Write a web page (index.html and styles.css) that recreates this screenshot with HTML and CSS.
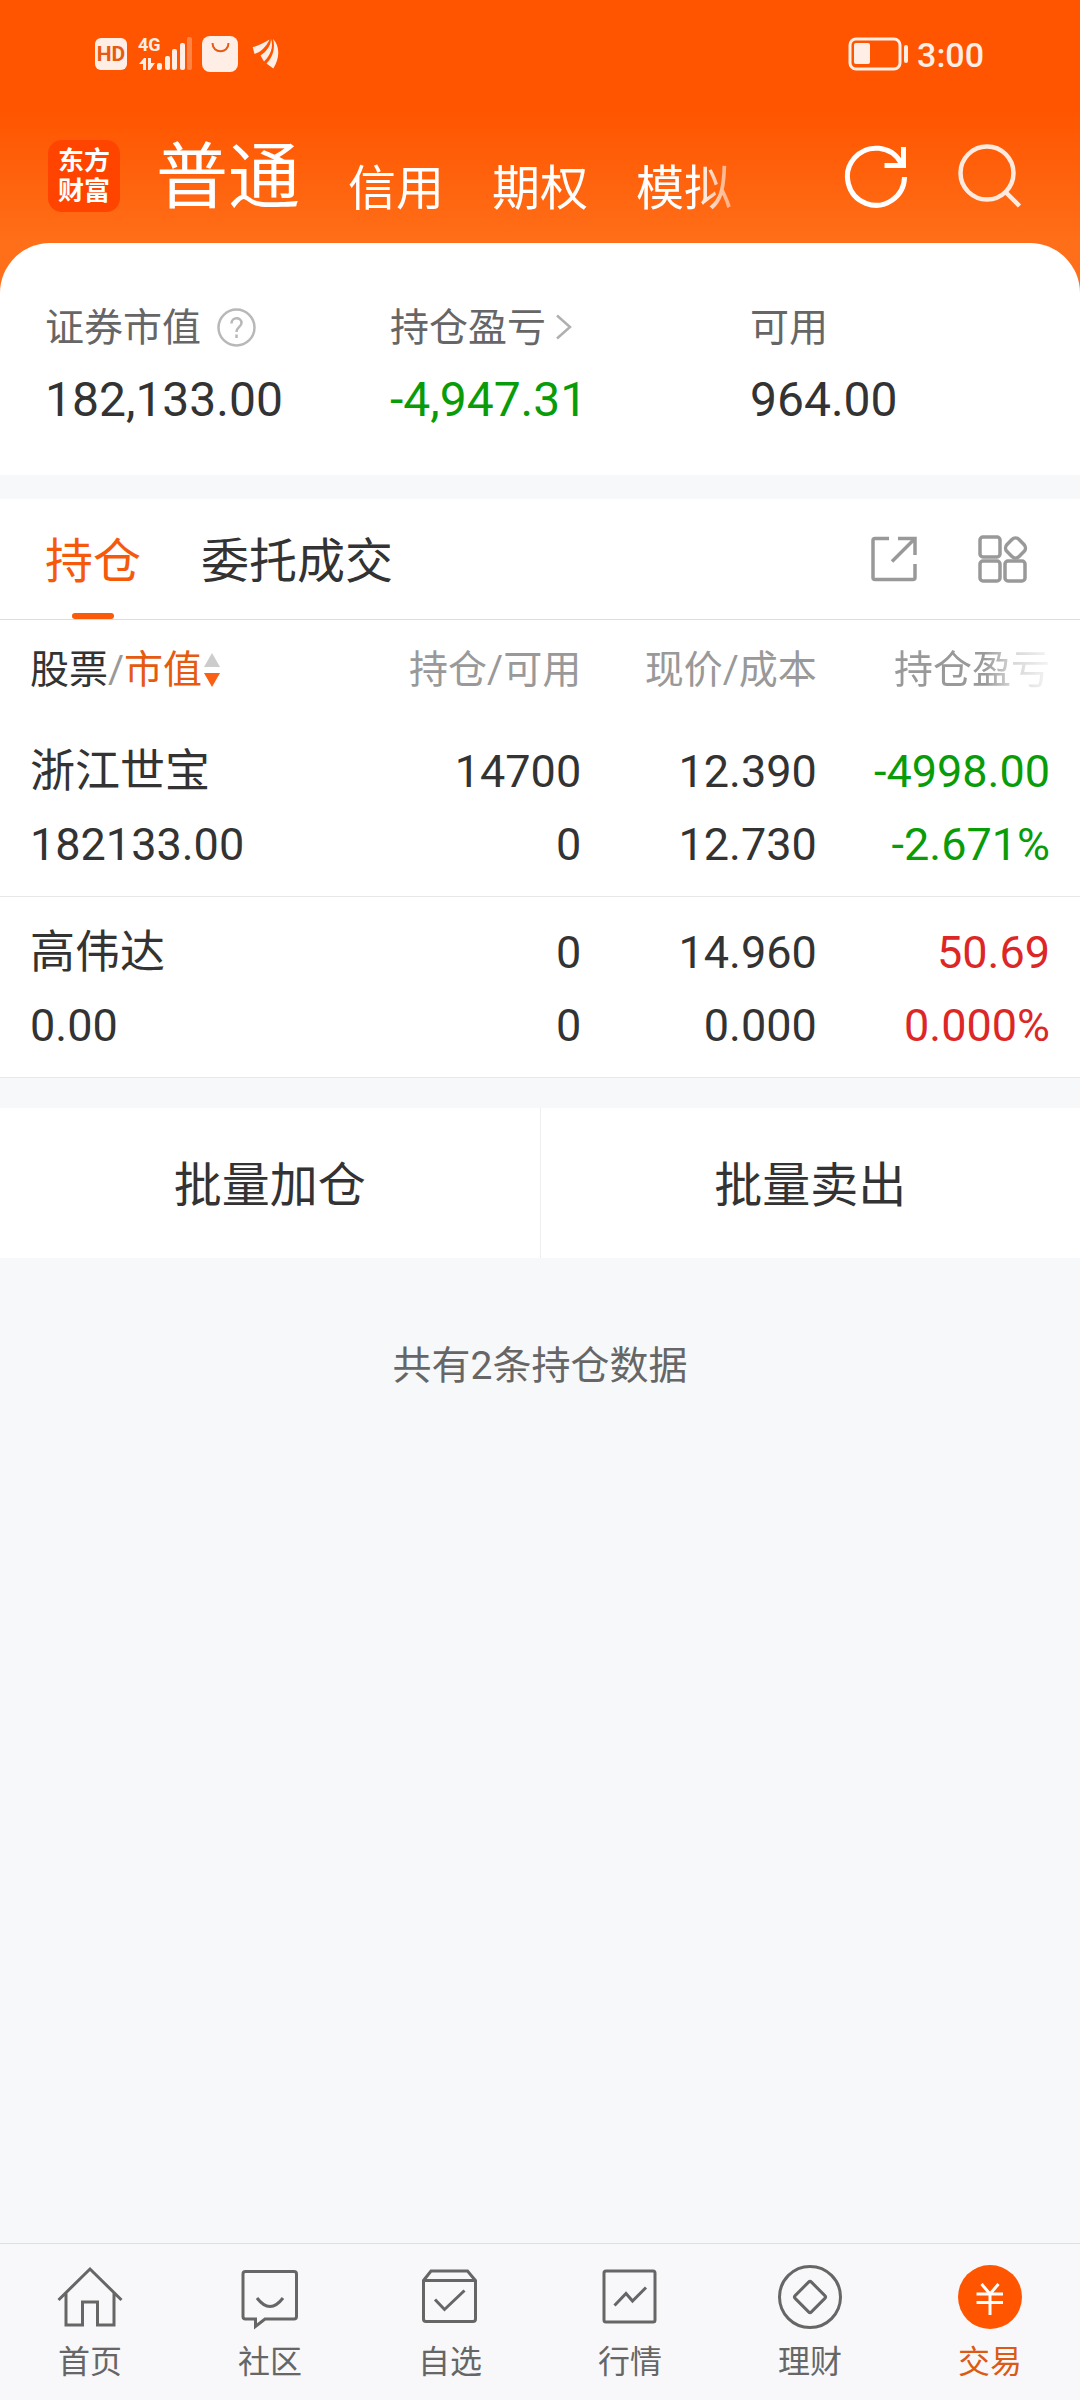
FILE: index.html
```html
<!DOCTYPE html>
<html lang="zh-CN">
<head>
    <meta charset="UTF-8">
    <meta name="viewport" content="width=device-width, initial-scale=1">
    <title>交易</title>
    <link rel="stylesheet" href="styles.css">
</head>
<body>

<header class="header">
    <div class="status">
        <svg class="status-hd" width="34" height="34" viewBox="0 0 34 34">
            <rect x="1" y="1" width="32" height="32" rx="6" fill="#ffeee5"/>
            <text x="17" y="24" text-anchor="middle" font-size="21" font-weight="700" fill="#e85a14">HD</text>
        </svg>
        <svg class="status-signal" width="56" height="48" viewBox="0 -6 56 48" fill="#ffeee5">
            <text x="0" y="15" font-size="18" font-weight="700">4G</text>
            <path d="M1 28L6 22H8V34H5V28ZM10 22H13V27H17L12 34H10Z"/>
            <rect x="19" y="27" width="5" height="7" rx="2"/>
            <rect x="27" y="20" width="5" height="14" rx="2"/>
            <rect x="34" y="13" width="5" height="21" rx="2"/>
            <rect x="42" y="7" width="5" height="27" rx="2"/>
            <rect x="49" y="1" width="5" height="33" rx="2" opacity="0.3"/>
        </svg>
        <svg class="status-bag" width="36" height="36" viewBox="0 0 36 36">
            <rect width="36" height="36" rx="8" fill="#ffeee5"/>
            <path d="M10.5 7C10.5 18 26.5 18 26.5 7" fill="none" stroke="#e85a14" stroke-width="2"/>
        </svg>
        <svg class="status-wing" width="28" height="32" viewBox="0 0 28 32" fill="#ffeee5">
            <path d="M0.7 9C6 8 12 5 17.5 1.5C14 9 9 14 2.5 16Z"/>
            <path d="M19 1C19 8 14 14 8.5 17.5L12 23.5C18 18 22 9 19 1Z"/>
            <path d="M21 1C28 8 28 20 21.3 30.5L14.5 25.5C21 19 23.5 10 21 1Z"/>
        </svg>
        <svg class="status-battery" width="60" height="34" viewBox="0 0 60 34">
            <rect x="2" y="2" width="50" height="30" rx="6" fill="none" stroke="#ffeee5" stroke-width="3"/>
            <rect x="6" y="6" width="16" height="21" rx="2" fill="#ffeee5"/>
            <rect x="56" y="8" width="4" height="18" rx="2" fill="#ffeee5"/>
        </svg>
        <span class="status-time">3:00</span>
    </div>

    <div class="topbar">
        <a class="logo" href="#">东方<br>财富</a>
        <nav class="accounts">
            <a class="account account-active" href="#">普通</a>
            <a class="account" href="#">信用</a>
            <a class="account" href="#">期权</a>
            <a class="account" href="#">模拟</a>
        </nav>
        <button class="icon-button" type="button" aria-label="刷新">
            <svg width="64" height="64" viewBox="0 0 64 64" fill="none" stroke="#fff" stroke-width="5">
                <path d="M60.5 33A28.5 28.5 0 1 1 57 19"/>
                <path d="M59.5 3V21.5H40.5"/>
            </svg>
        </button>
        <button class="icon-button icon-search" type="button" aria-label="搜索">
            <svg width="66" height="66" viewBox="0 0 66 66" fill="none" stroke="#ffeadf" stroke-width="4.5">
                <circle cx="30" cy="30" r="26.5"/>
                <path d="M48.5 49L62.5 63"/>
            </svg>
        </button>
    </div>
</header>

<section class="summary">
    <div class="summary-item">
        <div class="summary-label">证券市值
            <button class="icon-button help" type="button" aria-label="说明">
                <svg width="39" height="39" viewBox="0 0 39 39" fill="none" stroke="#b8b8b8" stroke-width="2.5">
                    <circle cx="19.5" cy="19.5" r="18"/>
                    <path d="M14.5 15.5C14.5 8.5 24.5 8.5 24.5 15C24.5 19 19.5 19 19.5 24M19.5 26.5V30"/>
                </svg>
            </button>
        </div>
        <div class="summary-value">182,133.00</div>
    </div>
    <div class="summary-item">
        <div class="summary-label">持仓盈亏
            <svg class="chevron" width="18" height="26" viewBox="0 0 18 26" fill="none" stroke="#b0b0b0" stroke-width="2.5">
                <path d="M2 1.5L15 13L2 24.5"/>
            </svg>
        </div>
        <div class="summary-value down">-4,947.31</div>
    </div>
    <div class="summary-item">
        <div class="summary-label">可用</div>
        <div class="summary-value">964.00</div>
    </div>
</section>

<section class="holdings">
    <div class="tabs">
        <a class="tab tab-active" href="#">持仓</a>
        <a class="tab" href="#">委托成交</a>
        <button class="icon-button tab-share" type="button" aria-label="分享">
            <svg width="48" height="48" viewBox="0 0 48 48" fill="none" stroke="#999" stroke-width="3.5">
                <path d="M19 3.5H5Q3 3.5 3 5.5V42.5Q3 44.5 5 44.5H43Q45 44.5 45 42.5V29"/>
                <path d="M28 3.5H45V20M44 4.5L22 26.5"/>
            </svg>
        </button>
        <button class="icon-button" type="button" aria-label="更多功能">
            <svg width="50" height="50" viewBox="0 0 50 50" fill="none" stroke="#999" stroke-width="3.5">
                <rect x="2" y="3" width="20" height="20" rx="3"/>
                <rect x="2" y="27" width="20" height="20" rx="3"/>
                <rect x="27" y="27" width="20" height="20" rx="3"/>
                <rect x="29" y="5.5" width="17" height="17" rx="5" transform="rotate(45 37.5 14)"/>
            </svg>
        </button>
    </div>

    <table class="stocks">
        <thead>
            <tr>
                <th class="col-name">
                    <button class="sort" type="button">股票<span class="slash">/</span><span class="sort-key">市值</span><svg width="18" height="36" viewBox="0 0 18 36">
                            <path d="M1 15L9 1L17 15Z" fill="#ccc"/>
                            <path d="M1 21H17L9 35Z" fill="#fa5f14"/>
                        </svg></button>
                </th>
                <th class="col-amount">持仓/可用</th>
                <th class="col-price">现价/成本</th>
                <th class="col-profit"><span class="fade">持仓盈亏</span></th>
            </tr>
        </thead>
        <tbody>
            <tr>
                <td>浙江世宝<br>182133.00</td>
                <td>14700<br>0</td>
                <td>12.390<br>12.730</td>
                <td class="down">-4998.00<br>-2.671%</td>
            </tr>
            <tr>
                <td>高伟达<br>0.00</td>
                <td>0<br>0</td>
                <td>14.960<br>0.000</td>
                <td class="up">50.69<br>0.000%</td>
            </tr>
        </tbody>
    </table>
</section>

<div class="batch">
    <button class="batch-button" type="button">批量加仓</button>
    <button class="batch-button" type="button">批量卖出</button>
</div>

<p class="total">共有2条持仓数据</p>

<nav class="bottom-nav">
    <a class="nav-item" href="#">
        <svg width="66" height="66" viewBox="0 0 66 66">
            <path d="M1.5 36L33 5L64.5 36M9 29V61H25.5V38H40.5V61H57V29"/>
        </svg>
        首页
    </a>
    <a class="nav-item" href="#">
        <svg width="66" height="66" viewBox="0 0 66 66">
            <path d="M8.5 7.5H57Q59.5 7.5 59.5 10V52.5Q59.5 55 57 55H28L18.5 62.5V55H8.5Q6 55 6 52.5V10Q6 7.5 8.5 7.5Z"/>
            <path d="M20 34Q33 51 46 34"/>
        </svg>
        社区
    </a>
    <a class="nav-item" href="#">
        <svg width="66" height="66" viewBox="0 0 66 66">
            <path d="M6.5 16.5L14 7H50.5L58.5 16.5V55Q58.5 57.5 56 57.5H9Q6.5 57.5 6.5 55ZM6.5 16.5H58.5"/>
            <path d="M18 35.5L27.5 45.5L47.5 26.5"/>
        </svg>
        自选
    </a>
    <a class="nav-item" href="#">
        <svg width="66" height="66" viewBox="0 0 66 66">
            <rect x="7" y="7" width="51" height="51" rx="2"/>
            <path d="M17.5 41.5L29 29.5L35.5 37L49 23.5"/>
        </svg>
        行情
    </a>
    <a class="nav-item" href="#">
        <svg width="66" height="66" viewBox="0 0 66 66">
            <circle cx="33" cy="33" r="30.5"/>
            <rect x="21.5" y="21.5" width="23" height="23" rx="2" transform="rotate(45 33 33)"/>
        </svg>
        理财
    </a>
    <a class="nav-item nav-active" href="#">
        <svg width="66" height="66" viewBox="0 0 66 66">
            <circle cx="33" cy="33" r="32" fill="#f50" stroke="none"/>
            <path d="M24.5 20L33 30L41.5 20M19.5 30H46M19.5 38.5H46M33 30V51" stroke="#fff"/>
        </svg>
        交易
    </a>
</nav>

</body>
</html>
```
FILE: styles.css
```css
* {
    box-sizing: border-box;
}

body {
    margin: 0;
    min-height: 100vh;
    display: flex;
    flex-direction: column;
    background: #f7f8fa;
    color: #333;
    font-family: Roboto, "Noto Sans CJK SC", sans-serif;
}

a {
    color: inherit;
    text-decoration: none;
}

button {
    padding: 0;
    border: none;
    background: none;
    color: inherit;
    font: inherit;
}

svg {
    display: block;
    flex: none;
}

.icon-button {
    display: block;
    flex: none;
}

.up { color: #dd2727; }
.down { color: #099c09; }

/*---------Header-------------*/
.header {
    padding-bottom: 50px;
    background: linear-gradient(#ff5500 110px, #ff6e18 240px);
    color: #fff;
}

.status {
    display: flex;
    align-items: center;
    height: 108px;
    padding: 0 96px 0 94px;
}

.status-signal { margin-left: 10px; }
.status-bag { margin-left: 8px; }
.status-wing { margin-left: 14px; }
.status-battery { margin-left: auto; }

.status-time {
    margin-left: 9px;
    padding-top: 2px;
    color: #ffeee5;
    font-size: 34px;
    font-weight: 500;
}

.topbar {
    display: flex;
    align-items: center;
    height: 135px;
    padding: 0 57px 0 48px;
}

.logo {
    width: 72px;
    height: 72px;
    padding-top: 6px;
    border-radius: 14px;
    background: #ff4400;
    font-size: 26px;
    font-weight: 700;
    line-height: 30px;
    text-align: center;
}

.accounts {
    flex: 1;
    display: flex;
    align-items: flex-end;
    gap: 48px;
    margin: 0 84px 0 36px;
    padding-top: 4px;
    overflow: hidden;
    white-space: nowrap;
    -webkit-mask-image: linear-gradient(to right, #000 calc(100% - 64px), transparent);
    mask-image: linear-gradient(to right, #000 calc(100% - 64px), transparent);
}

.account {
    font-size: 48px;
    line-height: 74px;
}

.account-active {
    font-size: 72px;
    line-height: 96px;
}

.icon-search {
    margin-left: 49px;
}

/*---------Summary-------------*/
.summary {
    display: grid;
    grid-template-columns: 23fr 24fr 19fr;
    margin-top: -50px;
    padding: 51px 45px 42px;
    border-radius: 50px 50px 0 0;
    background: #fff;
}

.summary-label {
    display: flex;
    align-items: center;
    height: 60px;
    color: #666;
    font-size: 39px;
}

.help { margin: 6px 0 0 16px; }
.chevron { margin: 6px 0 0 9px; }

.summary-value {
    padding-top: 12px;
    font-size: 48px;
    line-height: 67px;
}

/*---------Holdings-------------*/
.holdings {
    margin-top: 24px;
    background: #fff;
}

.tabs {
    display: flex;
    align-items: center;
    height: 121px;
    padding: 0 52px 0 45px;
    border-bottom: 1px solid #ddd;
}

.tab {
    position: relative;
    margin-right: 60px;
    padding-top: 6px;
    font-size: 48px;
    line-height: 114px;
}

.tab-active {
    color: #f55a0a;
}

.tab-active::after {
    content: "";
    position: absolute;
    left: 50%;
    bottom: 0;
    width: 42px;
    height: 6px;
    margin-left: -21px;
    border-radius: 3px;
    background: #fa5a0a;
}

.tab-share {
    margin-left: auto;
    margin-right: 60px;
}

.stocks {
    width: 100%;
    table-layout: fixed;
    border-collapse: collapse;
}

.stocks th {
    height: 96px;
    padding: 4px 0 0 30px;
    color: #999;
    font-size: 39px;
    font-weight: 400;
    line-height: 92px;
    text-align: right;
    white-space: nowrap;
}

.stocks td {
    padding: 19px 0 15px;
    border-bottom: 1px solid #e8e8e8;
    font-size: 45px;
    line-height: 73px;
    text-align: right;
}

.stocks th:first-child,
.stocks td:first-child {
    padding-left: 30px;
    text-align: left;
}

.stocks th:last-child,
.stocks td:last-child {
    padding-right: 30px;
}

.col-name { width: 32%; }
.col-amount { width: 22%; }
.col-price { width: 22%; }
.col-profit { width: 24%; }

/* keeps the price column clear of the wider profit figures */
.stocks th:nth-child(3),
.stocks td:nth-child(3) {
    padding-right: 4px;
}

.stocks th:nth-child(2),
.stocks td:nth-child(2) {
    padding-right: 2px;
}

.sort {
    display: flex;
    align-items: center;
    color: #333;
}

.sort svg { margin-left: 1px; }
.slash { color: #999; }
.sort-key { color: #e65a0f; }

.fade {
    -webkit-mask-image: linear-gradient(to right, #000 58%, rgba(0, 0, 0, 0.4) 76%, rgba(0, 0, 0, 0.1));
    mask-image: linear-gradient(to right, #000 58%, rgba(0, 0, 0, 0.4) 76%, rgba(0, 0, 0, 0.1));
}

/*---------Batch buttons-------------*/
.batch {
    display: flex;
    margin-top: 30px;
    background: #fff;
}

.batch-button {
    flex: 1;
    height: 150px;
    padding-bottom: 4px;
    font-size: 48px;
}

.batch-button:first-child {
    border-right: 1px solid #eee;
}

.total {
    margin: 78px 0;
    color: #666;
    font-size: 39px;
    line-height: 60px;
    text-align: center;
}

/*---------Bottom nav-------------*/
.bottom-nav {
    display: flex;
    margin-top: auto;
    border-top: 1px solid #e0e0e0;
    background: #f8f8fa;
}

.nav-item {
    flex: 1;
    display: flex;
    flex-direction: column;
    align-items: center;
    gap: 8px;
    padding: 20px 0 14px;
    color: #666;
    font-size: 32px;
    line-height: 48px;
}

.nav-item svg {
    fill: none;
    stroke: #666;
    stroke-width: 3;
}

.nav-active {
    color: #dc5a14;
}
```
